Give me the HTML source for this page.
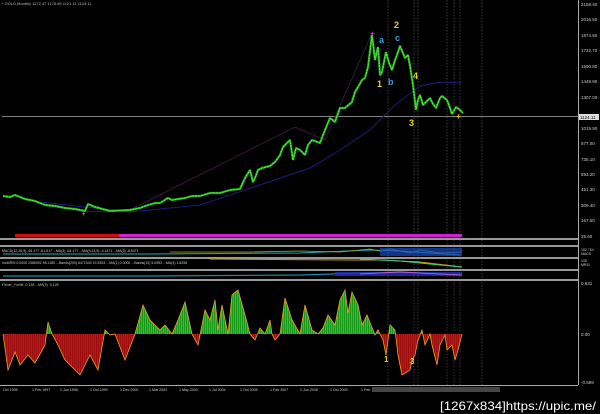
<!DOCTYPE html>
<html><head><style>
html,body{margin:0;padding:0;background:#000;width:600px;height:414px;overflow:hidden}
svg{display:block}
text{font-family:"Liberation Sans",sans-serif}
</style></head><body>
<svg width="600" height="414" viewBox="0 0 600 414" xmlns="http://www.w3.org/2000/svg">
<defs>
<clipPath id="above"><rect x="0" y="280" width="600" height="54"/></clipPath>
<clipPath id="below"><rect x="0" y="334" width="600" height="60"/></clipPath>
<pattern id="vb" width="2" height="10" patternUnits="userSpaceOnUse"><rect width="1" height="10" fill="#000" opacity="0.25"/></pattern>
</defs>
<rect width="600" height="414" fill="#000"/>
<text x="2" y="5" font-size="4" fill="#bbb">* GOLD,Monthly  1172.47 1175.89 1121.11 1124.11</text>
<line x1="578.5" y1="0" x2="578.5" y2="385" stroke="#aaa" stroke-width="1"/>
<g font-size="4.5" fill="#ccc">
<text x="581" y="6">2158.40</text><text x="581" y="21">2016.50</text><text x="581" y="37">1874.60</text>
<text x="581" y="52">1732.70</text><text x="581" y="68">1590.80</text><text x="581" y="83">1448.90</text>
<text x="581" y="99">1307.00</text><text x="581" y="130">1019.90</text><text x="581" y="145">877.00</text>
<text x="581" y="161">735.10</text><text x="581" y="176">593.20</text><text x="581" y="191">451.30</text>
<text x="581" y="207">309.40</text><text x="581" y="222">167.50</text><text x="581" y="238">25.60</text>
</g>
<rect x="579" y="114" width="20" height="6" fill="#ddd"/>
<text x="580" y="119" font-size="4.5" fill="#000">1124.11</text>
<g stroke="#666" stroke-width="0.6" stroke-dasharray="1.5,1.5">
<line x1="388" y1="0" x2="388" y2="385"/><line x1="414" y1="0" x2="414" y2="385"/><line x1="418" y1="0" x2="418" y2="385"/>
<line x1="447" y1="0" x2="447" y2="385"/><line x1="454" y1="0" x2="454" y2="385"/><line x1="460" y1="0" x2="460" y2="385"/>
<line x1="482" y1="0" x2="482" y2="385"/>
</g>
<line x1="2" y1="116.5" x2="578" y2="116.5" stroke="#aaa" stroke-width="0.8"/>
<polyline fill="none" stroke="#1c1c80" stroke-width="1" points="40,202 130,212 200,205 260,185 310,168 340,150 370,130 395,105 420,86 440,82 462,83"/>
<polyline fill="none" stroke="#4a1e4a" stroke-width="0.7" points="85,212 130,210 295,127 325,140 372,33"/>
<polyline fill="none" stroke="#22aa22" stroke-width="2.2" stroke-linejoin="bevel" points="3,196 10,197 15,195 25,199 35,201 45,205 55,206 65,208 75,209 85,211 88,204 95,207 110,211 130,210 140,208 145,206 155,203 160,203 168,198 172,200 185,198 192,196 200,196 210,193 220,193 230,190 240,189 245,178 250,170 253,182 255,178 258,170 262,168 270,166 275,162 280,155 283,147 290,140 293,160 296,148 300,150 305,155 308,145 312,140 320,143 325,130 330,118 335,122 340,108 345,108 352,102 355,92 358,87 362,80 365,78 368,67 372,35 375,60 378,47 380,75 382,72 386,52 389,63 392,70 395,60 397,55 400,46 405,58 408,55 410,66 413,85 416,110 418,100 420,95 423,105 425,103 430,98 433,104 436,108 440,98 442,96 447,100 450,108 452,114 456,107 460,110 463,113"/>
<polyline fill="none" stroke="#66ff44" stroke-width="0.8" stroke-dasharray="2,1" points="3,196 10,197 15,195 25,199 35,201 45,205 55,206 65,208 75,209 85,211 88,204 95,207 110,211 130,210 140,208 145,206 155,203 160,203 168,198 172,200 185,198 192,196 200,196 210,193 220,193 230,190 240,189 245,178 250,170 253,182 255,178 258,170 262,168 270,166 275,162 280,155 283,147 290,140 293,160 296,148 300,150 305,155 308,145 312,140 320,143 325,130 330,118 335,122 340,108 345,108 352,102 355,92 358,87 362,80 365,78 368,67 372,35 375,60 378,47 380,75 382,72 386,52 389,63 392,70 395,60 397,55 400,46 405,58 408,55 410,66 413,85 416,110 418,100 420,95 423,105 425,103 430,98 433,104 436,108 440,98 442,96 447,100 450,108 452,114 456,107 460,110 463,113"/>
<text x="370" y="37" font-size="9" fill="#e040e0">+</text>
<g font-size="9" font-weight="bold">
<text x="394" y="28" fill="#e8d020">2</text><text x="379" y="43" fill="#30a0e0">a</text><text x="395" y="41" fill="#30a0e0">c</text>
<text x="377" y="87" fill="#e8d020">1</text><text x="388" y="85" fill="#30a0e0">b</text><text x="413" y="79" fill="#e8d020">4</text>
<text x="409" y="126" fill="#e8d020">3</text><text x="456" y="119" fill="#e8d020" font-size="8">+</text>
<text x="82" y="216" fill="#c8b020" font-size="6">+</text>
</g>
<rect x="15" y="234" width="104" height="3" fill="#d01010"/>
<rect x="119" y="234" width="343" height="3" fill="#d020d0"/>
<g fill="#999">
<rect x="0" y="238" width="578" height="2"/><rect x="0" y="245" width="578" height="2"/>
<rect x="0" y="257" width="578" height="2"/><rect x="0" y="269" width="578" height="2"/>
<rect x="0" y="279" width="578" height="2"/>
</g>
<g font-size="3.5" fill="#ccc">
<text x="2" y="252">MACD(12,26,9) -64.177 -61.617 ...MA(3) -64.177 ...MA(5,13,5) -4.1471 ...MA(3) -6.5471</text>
<text x="2" y="264">IncMRSI 0.0000 2386092 98.1180 ...Bands(200) 6471940 19.5353 ...MA(1) 0.0000 ...Bands(13) 5.0953 ...MA(4) 1.8298</text>
<text x="2" y="286">Fisher_Yur4ik -0.128 ...MA(3) -0.128</text>
<text x="581" y="251">182.754</text><text x="581" y="255">MACD</text><text x="581" y="262">105</text><text x="581" y="266">MRSI</text>
</g>
<polyline fill="none" stroke="#2aa" stroke-width="1" points="3,254 150,254 300,253 370,250 400,251 460,255"/>
<polyline fill="none" stroke="#aa2" stroke-width="0.8" points="170,252 250,252 300,251 340,252 370,249 380,251 390,249 410,253 420,250 440,253 462,252"/>
<rect x="380" y="248" width="82" height="8" fill="#1848c0" opacity="0.7"/>
<polyline fill="none" stroke="#c90" stroke-width="1" points="210,259 350,260 380,260 420,262 462,267"/>
<polyline fill="none" stroke="#4c8" stroke-width="1" points="360,259 400,261 440,265 462,267"/>
<polyline fill="none" stroke="#28a" stroke-width="1.2" points="3,276 150,276 300,275 400,272 462,275"/>
<rect x="335" y="272" width="127" height="4" fill="#2030c0" opacity="0.8"/>
<polyline fill="none" stroke="#c6c" stroke-width="0.8" points="360,274 400,272 440,274 462,275"/>
<g>
<polygon clip-path="url(#above)" fill="#22cc22" points="3,334 8,370 15,352 20,365 28,355 35,363 45,345 48,322 52,334 58,345 65,360 75,370 80,375 90,355 98,370 105,330 110,335 115,334 125,360 135,334 143,305 150,320 160,330 165,325 172,334 178,320 185,302 192,334 198,345 205,310 210,320 215,300 218,330 222,305 228,334 232,295 238,290 245,315 250,334 255,340 260,328 265,334 270,320 272,334 275,340 280,334 285,298 292,320 300,334 305,305 312,330 318,334 323,328 328,315 335,325 340,300 345,290 348,313 352,292 358,305 362,325 367,315 375,335 378,330 383,340 386,355 390,325 395,330 398,355 402,375 410,370 412,360 415,355 418,340 422,330 425,345 430,334 432,345 437,365 440,345 445,335 447,350 452,345 455,360 458,350 462,334"/>
<polygon clip-path="url(#below)" fill="#d01010" points="3,334 8,370 15,352 20,365 28,355 35,363 45,345 48,322 52,334 58,345 65,360 75,370 80,375 90,355 98,370 105,330 110,335 115,334 125,360 135,334 143,305 150,320 160,330 165,325 172,334 178,320 185,302 192,334 198,345 205,310 210,320 215,300 218,330 222,305 228,334 232,295 238,290 245,315 250,334 255,340 260,328 265,334 270,320 272,334 275,340 280,334 285,298 292,320 300,334 305,305 312,330 318,334 323,328 328,315 335,325 340,300 345,290 348,313 352,292 358,305 362,325 367,315 375,335 378,330 383,340 386,355 390,325 395,330 398,355 402,375 410,370 412,360 415,355 418,340 422,330 425,345 430,334 432,345 437,365 440,345 445,335 447,350 452,345 455,360 458,350 462,334"/>
<rect x="3" y="285" width="460" height="100" fill="url(#vb)"/>
<polyline fill="none" stroke="#f0a020" stroke-width="0.8" points="3,334 8,370 15,352 20,365 28,355 35,363 45,345 48,322 52,334 58,345 65,360 75,370 80,375 90,355 98,370 105,330 110,335 115,334 125,360 135,334 143,305 150,320 160,330 165,325 172,334 178,320 185,302 192,334 198,345 205,310 210,320 215,300 218,330 222,305 228,334 232,295 238,290 245,315 250,334 255,340 260,328 265,334 270,320 272,334 275,340 280,334 285,298 292,320 300,334 305,305 312,330 318,334 323,328 328,315 335,325 340,300 345,290 348,313 352,292 358,305 362,325 367,315 375,335 378,330 383,340 386,355 390,325 395,330 398,355 402,375 410,370 412,360 415,355 418,340 422,330 425,345 430,334 432,345 437,365 440,345 445,335 447,350 452,345 455,360 458,350 462,334"/>
</g>
<g font-size="8" font-weight="bold" fill="#e8d020"><text x="384" y="362">1</text><text x="410" y="364">3</text></g>
<g font-size="4.5" fill="#ccc"><text x="581" y="285">0.631</text><text x="581" y="336">0.00</text><text x="581" y="384">-0.599</text></g>
<line x1="0" y1="385.5" x2="578" y2="385.5" stroke="#aaa" stroke-width="1"/>
<rect x="372" y="387" width="128" height="5" fill="#444"/>
<g font-size="3.6" fill="#ccc">
<text x="3" y="391">Oct 1995</text><text x="32" y="391">1 Feb 1997</text><text x="60" y="391">1 Jun 1998</text>
<text x="90" y="391">1 Oct 1999</text><text x="120" y="391">1 Dec 2000</text><text x="149" y="391">1 Mar 2002</text>
<text x="179" y="391">1 May 2003</text><text x="209" y="391">1 Jul 2004</text><text x="240" y="391">1 Oct 2005</text>
<text x="270" y="391">1 Feb 2007</text><text x="300" y="391">1 Jun 2008</text><text x="330" y="391">1 Oct 2009</text>
<text x="361" y="391">1 Feb</text>
</g>
<text x="440" y="410" font-size="12" fill="#fff" font-family="Liberation Mono,monospace" textLength="156" lengthAdjust="spacingAndGlyphs">[1267x834]https://upic.me/</text>
</svg>
</body></html>
